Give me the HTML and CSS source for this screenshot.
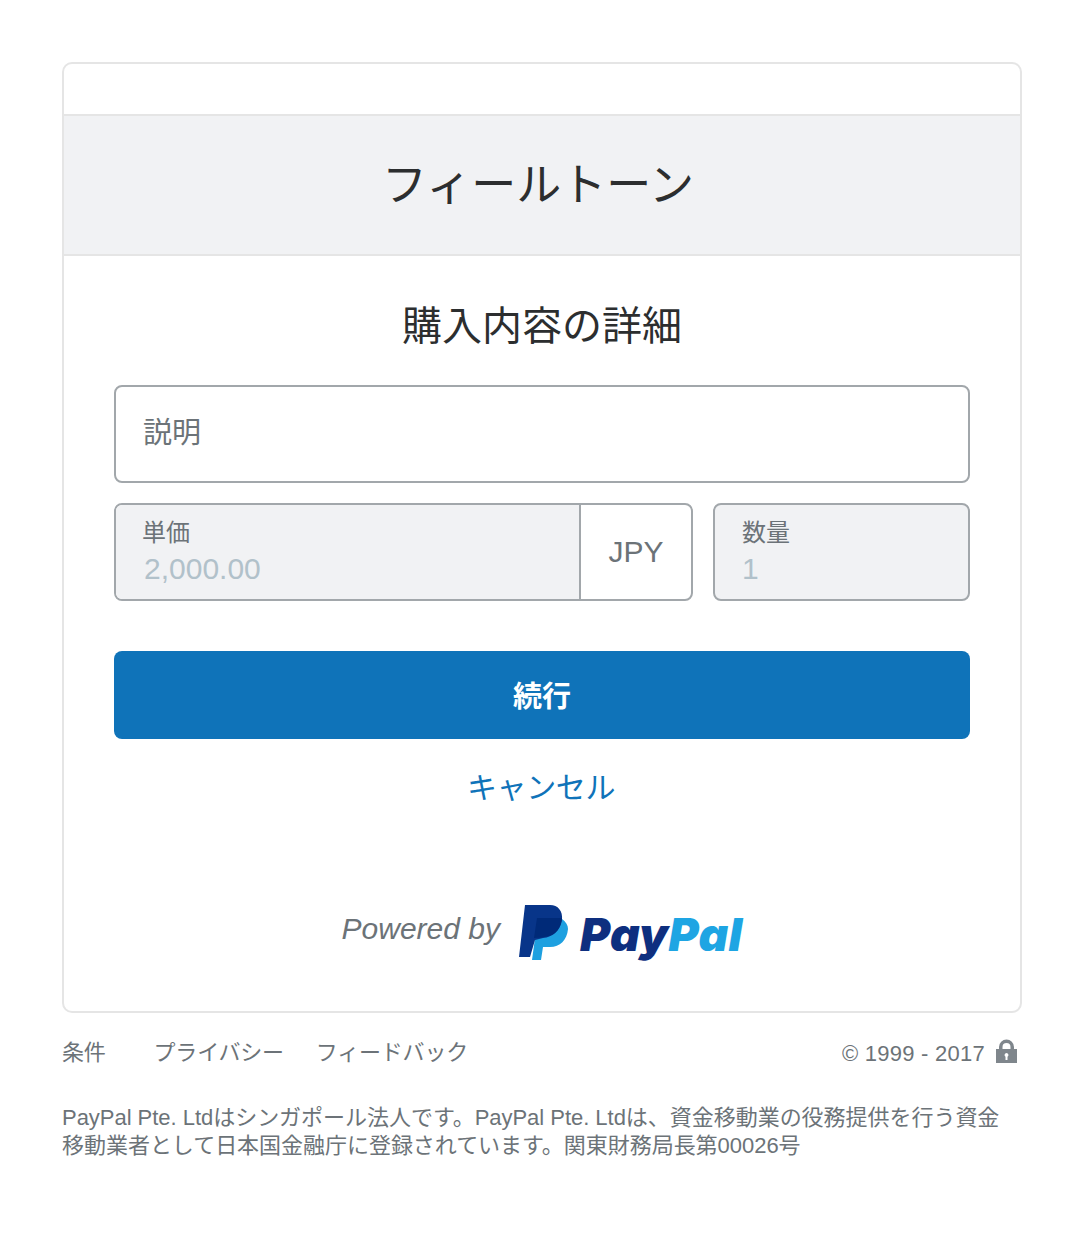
FILE: index.html
```html
<!DOCTYPE html>
<html lang="ja">
<head>
    <title>PayPal</title>
    <link rel="stylesheet" href="styles.css">
</head>
<body>
    <div class="page">
        <div class="card">
            <div class="merchant">フィールトーン</div>
            <div class="content">
                <h1 class="title">購入内容の詳細</h1>
                <div class="field field-desc">説明</div>
                <div class="price-row">
                    <div class="price-group">
                        <div class="price-box">
                            <div class="label">単価</div>
                            <div class="value">2,000.00</div>
                        </div>
                        <div class="currency">JPY</div>
                    </div>
                    <div class="qty-box">
                        <div class="label">数量</div>
                        <div class="value">1</div>
                    </div>
                </div>
                <div class="btn-continue">続行</div>
                <a class="cancel" href="#">キャンセル</a>
                <div class="powered">
                    <span class="powered-text">Powered by</span>
                    <svg class="pp-mark" width="50" height="56" viewBox="0 0 50 56">
                        <path fill="#1ea0e0" d="M43 14c4 3 6 6 6 10-1 11-8 18-18 18h-7l-2 13H13l3-22z"/>
                        <path fill="#083589" d="M6 0h25c8 0 13 6 12 15-2 11-9 17-19 18l-8 2-5 17H0z"/>
                        <path fill="#002a78" d="M18 13h25c-1 10-6 16-13 18-5 1-10 2-15 2z"/>
                    </svg>
                    <span class="pp-word"><span class="pp-dark">Pay</span><span class="pp-light">Pal</span></span>
                </div>
            </div>
        </div>
        <div class="footer">
            <div class="footer-links">
                <a href="#">条件</a>
                <a href="#">プライバシー</a>
                <a href="#">フィードバック</a>
            </div>
            <div class="copyright">
                <span>© 1999 - 2017</span>
                <svg class="lock" width="21" height="24" viewBox="0 0 21 24">
                    <path fill="#7f868c" fill-rule="evenodd" d="M3 10V8a7.500 7.500 0 0 1 15 0v2h3v14H0V10zm3.500 0h8V8a4 4 0 0 0-8 0zM10.500 14a2 2 0 0 0-1 3.700V21h2v-3.300a2 2 0 0 0-1-3.700z"/>
                </svg>
            </div>
        </div>
        <p class="legal">PayPal Pte. Ltdはシンガポール法人です。PayPal Pte. Ltdは、資金移動業の役務提供を行う資金移動業者として日本国金融庁に登録されています。関東財務局長第00026号</p>
    </div>
</body>
</html>
```

FILE: styles.css
```css
body {
    margin: 0;
    background-color: #fff;
    font-family: "Liberation Sans", "Noto Sans CJK JP", sans-serif;
    color: #2c2e2f;
}

.page {
    width: 960px;
    padding: 62px 0 0 62px;
}

.card {
    border: 2px solid #e5e5e5;
    border-radius: 10px;
    padding-top: 50px;
    height: 951px;
    box-sizing: border-box;
}

.merchant {
    height: 142px;
    box-sizing: border-box;
    border-top: 2px solid #e5e5e5;
    border-bottom: 2px solid #e5e5e5;
    background-color: #f1f2f4;
    padding-right: 8px;
    text-align: center;
    font-size: 45px;
    line-height: 139px;
    font-weight: 400;
}

.content {
    padding: 0 50px;
}

.title {
    margin: 0;
    padding-top: 43px;
    height: 129px;
    box-sizing: border-box;
    text-align: center;
    font-size: 40px;
    line-height: 54px;
    font-weight: 400;
}

.field-desc {
    height: 98px;
    box-sizing: border-box;
    border: 2px solid #a2a7ab;
    border-radius: 8px;
    padding-left: 27px;
    font-size: 29px;
    line-height: 92px;
    color: #6c7378;
}

.price-row {
    display: flex;
    gap: 20px;
    margin-top: 20px;
}

.price-group {
    display: flex;
    width: 579px;
    height: 98px;
    box-sizing: border-box;
    border: 2px solid #a2a7ab;
    border-radius: 8px;
    overflow: hidden;
}

.price-box {
    flex: 1;
    background-color: #f1f2f4;
    padding-left: 28px;
}

.price-box .label {
    margin-left: -2px;
}

.currency {
    width: 112px;
    box-sizing: border-box;
    border-left: 2px solid #a2a7ab;
    text-align: center;
    font-size: 30px;
    line-height: 94px;
    color: #6c7378;
}

.qty-box {
    flex: 1;
    height: 98px;
    box-sizing: border-box;
    border: 2px solid #a2a7ab;
    border-radius: 8px;
    background-color: #f1f2f4;
    padding-left: 27px;
}

.label {
    margin-top: 11px;
    font-size: 24px;
    line-height: 34px;
    color: #6c7378;
}

.value {
    font-size: 30px;
    line-height: 38px;
    color: #b1c1ca;
}

.btn-continue {
    margin-top: 50px;
    height: 88px;
    border-radius: 8px;
    background-color: #0f73b9;
    color: #fff;
    text-align: center;
    font-size: 29px;
    font-weight: 700;
    line-height: 92px;
}

.cancel {
    display: block;
    margin-top: 25px;
    padding-right: 2px;
    text-align: center;
    font-size: 30px;
    line-height: 48px;
    letter-spacing: -0.4px;
    color: #0f73b9;
    text-decoration: none;
}

.powered {
    display: flex;
    justify-content: center;
    align-items: flex-start;
    margin-top: 93px;
    height: 60px;
}

.powered-text {
    font-size: 30px;
    font-style: italic;
    line-height: 36px;
    margin-top: 6px;
    margin-right: 19px;
    color: #6c7378;
}

.pp-word {
    margin-left: 11px;
    margin-top: -1px;
    font-family: Inter, "Liberation Sans", sans-serif;
    font-size: 46px;
    font-weight: 900;
    font-style: italic;
    line-height: 60px;
    letter-spacing: 0.3px;
}

.pp-dark {
    color: #0e2f7f;
}

.pp-light {
    color: #1ea5e3;
}

.footer {
    display: flex;
    justify-content: space-between;
    align-items: center;
    margin-top: 24px;
    height: 32px;
    font-size: 22px;
    color: #6c7378;
}

.footer-links {
    margin-top: -7px;
    letter-spacing: -0.2px;
}

.footer-links a {
    margin-right: 26px;
    color: #6c7378;
    text-decoration: none;
}

.footer-links a:first-child {
    margin-right: 42px;
}

.copyright {
    display: flex;
    align-items: center;
    gap: 11px;
    margin-right: 5px;
    letter-spacing: 0.25px;
}

.copyright span {
    margin-top: 2px;
}

.lock {
    margin-top: -4px;
}

.legal {
    width: 950px;
    margin: 35px 0 0;
    font-size: 22px;
    line-height: 28px;
    letter-spacing: -0.03px;
    color: #6c7378;
}
```
